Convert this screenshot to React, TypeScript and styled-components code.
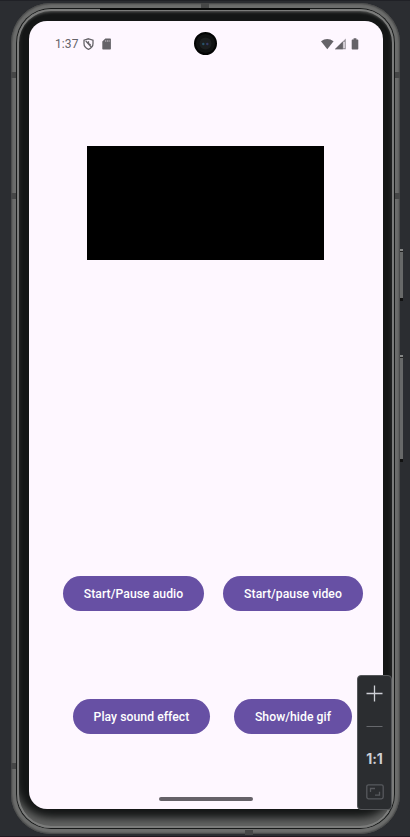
import React from 'react';
import styled, { createGlobalStyle } from 'styled-components';

const GlobalStyle = createGlobalStyle`
  * { box-sizing: border-box; }
  body { margin: 0; background: #2b2d31; font-family: Roboto, sans-serif; overflow: hidden; }
`;

const Desk = styled.main`
  position: relative;
  width: 410px;
  height: 837px;
  padding: 3px 0 0 11px;
  background: #2b2d31;
  border-top: 1px solid #202126;
  border-bottom: 1px solid #211820;
  overflow: hidden;
`;

const Shell = styled.div`
  width: 389px;
  height: 831px;
  margin-top: -1px;
  padding: 5px;
  border-radius: 40px;
  background: #6c6d6c;
  box-shadow: inset 0 0 2px 1px #424343;
`;

const Rim = styled.div`
  width: 379px;
  height: 821px;
  padding: 1px;
  border-radius: 35px;
  background: #181a1a;
`;

const Bezel = styled.div`
  width: 377px;
  height: 819px;
  padding: 12px 11px 19px 12px;
  border-radius: 34px;
  background: #141616;
  box-shadow: inset 0 0 0 2px #7b7c7b, inset 0 3px 3px 0 #5b5c5b, inset 0 -12px 9px -2px #636463;
`;

const Screen = styled.div`
  display: flex;
  flex-direction: column;
  width: 354px;
  height: 788px;
  border-radius: 18px;
  background: #fef7ff;
  overflow: hidden;
`;

const StatusBar = styled.header`
  display: grid;
  grid-template-columns: 137px 24px 1fr;
  height: 45px;
  padding: 11px 24px 0 26px;
  color: #656368;
`;

const StatusGroup = styled.div<{ $end?: boolean }>`
  display: flex;
  align-items: center;
  justify-content: ${p => (p.$end ? 'flex-end' : 'flex-start')};
  height: 23px;
  svg { display: block; flex: none; }
`;

const Clock = styled.span`
  width: 28px;
  padding-top: 1px;
  font-size: 12px;
  line-height: 23px;
  letter-spacing: 0.1px;
`;

const CardSlot = styled.span`
  margin-left: 8px;
`;

const Camera = styled.div`
  display: flex;
  width: 23px;
  height: 23px;
  margin-left: 2px;
  border-radius: 50%;
  background: #101212;
  border: 2px solid #030404;
`;

const VideoSurface = styled.div`
  width: 237px;
  height: 114px;
  margin: 80px 0 0 58px;
  background: #000;
`;

const ButtonRow = styled.div<{ $top: number; $left: number; $gap: number }>`
  display: flex;
  gap: ${p => p.$gap}px;
  margin: ${p => p.$top}px 0 0 ${p => p.$left}px;
`;

const PillButton = styled.button<{ $width: number }>`
  width: ${p => p.$width}px;
  height: 35px;
  padding: 1px 0 0;
  border: 0;
  border-radius: 18px;
  background: #6750a4;
  color: #fff;
  font: 500 12.2px/34px Roboto, sans-serif;
  letter-spacing: 0.05px;
  white-space: nowrap;
`;

const HomeHandle = styled.div`
  width: 94px;
  height: 4px;
  margin: auto 0 8px 130px;
  border-radius: 2px;
  background: #656168;
`;

const SideKey = styled.div<{ $top: number; $height: number }>`
  position: absolute;
  left: 400px;
  top: ${p => p.$top}px;
  width: 3px;
  height: ${p => p.$height}px;
  background: #686969;
  border-top: 2px solid #858686;
  border-bottom: 3px solid #111;
  box-shadow: inset 0 1px #222;
`;

const AntennaBand = styled.div<{ $x: number; $y: number; $flat?: boolean }>`
  position: absolute;
  left: ${p => p.$x}px;
  top: ${p => p.$y}px;
  width: ${p => (p.$flat ? 8 : 5)}px;
  height: ${p => (p.$flat ? 5 : 6)}px;
  background: #464747;
`;

const Speaker = styled.div`
  position: absolute;
  left: 100px;
  top: 7px;
  width: 210px;
  height: 2px;
  background: #080909;
`;

const ZoomPanel = styled.aside`
  position: absolute;
  left: 357px;
  top: 674px;
  display: flex;
  flex-direction: column;
  align-items: center;
  width: 35px;
  height: 135px;
  padding-top: 8px;
  border: 1px solid #55575a;
  border-radius: 4px;
  background: #2b2d30;
  color: #ced0d6;
  svg { display: block; flex: none; }
`;

const Ratio = styled.span`
  height: 20px;
  margin: 13px 0 15px;
  font: 700 14px/20px Inter, sans-serif;
  letter-spacing: -0.1px;
`;

const MinusSlot = styled.div`
  margin-top: 14px;
`;

const ShieldIcon = () => (
  <svg width="11" height="12" viewBox="0 0 11 12" fill="none" stroke="currentColor" strokeWidth="1.3">
    <path d="M5.5 .8 10 2.2v3.4c0 2.7-1.8 4.7-4.5 5.7C2.8 10.3 1 8.3 1 5.6V2.2Z" />
    <path d="M2.8 3 8.3 9M5.5 3.3v2.2l2.2 1.2" />
  </svg>
);

const CardIcon = () => (
  <svg width="9" height="12" viewBox="0 0 9 12">
    <path fill="currentColor" d="M3.3.5H8.2q.7 0 .7.7v9.6q0 .7-.7.7H1q-.7 0-.7-.7V3.5Z" />
    <path stroke="#bdb8bf" strokeWidth=".7" d="M3.7 2v2M5.4 2v2M7.1 2v2" />
  </svg>
);

const SignalIcons = () => (
  <svg width="39" height="12" viewBox="0 0 39 12" fill="currentColor">
    <path d="M1 3.2Q7.2-1.2 13.6 3.2L7.3 11.2Z" />
    <path d="M25.8.4V11.3H14.9Z" opacity=".65" />
    <path d="M22.8 3.4V11.3H14.9Z" />
    <path fill="#fef7ff" d="M23.5 4h1.1v6h-1.1z" />
    <path d="M33.6.3h2.8v1.2h1.2q.7 0 .7.7v8.6q0 .7-.7.7h-5.2q-.7 0-.7-.7V2.2q0-.7.7-.7h1.2Z" />
  </svg>
);

const PlusIcon = () => (
  <svg width="19" height="19" viewBox="0 0 19 19" stroke="currentColor" strokeWidth="1.3">
    <path d="M1.5 9.5h16M9.5 1.5v16" />
  </svg>
);

const MinusIcon = () => (
  <svg width="19" height="19" viewBox="0 0 19 19" stroke="#66686c" strokeWidth="1">
    <path d="M1.5 9.5h16" />
  </svg>
);

const FitIcon = () => (
  <svg width="18" height="16" viewBox="0 0 18 16" fill="none" stroke="#57595d" strokeWidth="1.3">
    <rect x=".8" y=".8" width="16.4" height="14" rx="1.8" />
    <path d="M4.5 8V4.5H9M9 11.2h4.5V7.7" />
  </svg>
);

export default function App() {
  return (
    <>
      <GlobalStyle />
      <Desk>
        <Shell>
          <Rim>
            <Bezel>
              <Screen>
                <StatusBar>
                  <StatusGroup>
                    <Clock>1:37</Clock>
                    <ShieldIcon />
                    <CardSlot><CardIcon /></CardSlot>
                  </StatusGroup>
                  <Camera>
                    <svg width="19" height="19" viewBox="0 0 19 19">
                      <circle cx="9.5" cy="9.5" r="6" fill="#1c1f20" />
                      <circle cx="7.3" cy="10" r="1.2" fill="#28546a" />
                      <circle cx="11.3" cy="10" r="1.2" fill="#343b68" />
                    </svg>
                  </Camera>
                  <StatusGroup $end>
                    <SignalIcons />
                  </StatusGroup>
                </StatusBar>
                <VideoSurface />
                <ButtonRow $top={316} $left={34} $gap={19}>
                  <PillButton $width={141}>Start/Pause audio</PillButton>
                  <PillButton $width={140}>Start/pause video</PillButton>
                </ButtonRow>
                <ButtonRow $top={88} $left={44} $gap={24}>
                  <PillButton $width={137}>Play sound effect</PillButton>
                  <PillButton $width={118}>Show/hide gif</PillButton>
                </ButtonRow>
                <HomeHandle />
              </Screen>
            </Bezel>
          </Rim>
        </Shell>
        <Speaker />
        <AntennaBand $x={201} $y={2} $flat />
        <AntennaBand $x={245} $y={829} $flat />
        <AntennaBand $x={11} $y={71} />
        <AntennaBand $x={11} $y={192} />
        <AntennaBand $x={11} $y={762} />
        <AntennaBand $x={395} $y={71} />
        <AntennaBand $x={395} $y={192} />
        <SideKey $top={248} $height={52} />
        <SideKey $top={354} $height={107} />
        <ZoomPanel>
          <PlusIcon />
          <MinusSlot><MinusIcon /></MinusSlot>
          <Ratio>1:1</Ratio>
          <FitIcon />
        </ZoomPanel>
      </Desk>
    </>
  );
}
